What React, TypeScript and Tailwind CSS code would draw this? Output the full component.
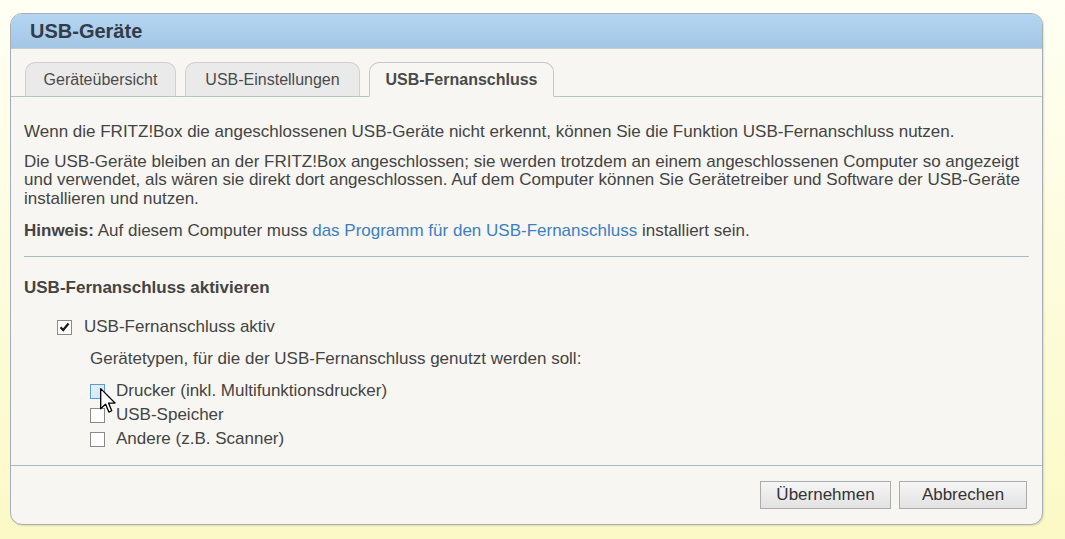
import React from 'react';

type Tab = { label: string; width: string; active?: boolean };

const tabs: Tab[] = [
  { label: 'Geräteübersicht', width: 'w-[151px]' },
  { label: 'USB-Einstellungen', width: 'w-[175px]' },
  { label: 'USB-Fernanschluss', width: 'w-[185px]', active: true },
];

function Box({ checked, hover }: { checked?: boolean; hover?: boolean }) {
  return (
    <span
      className={`flex h-[15px] w-[15px] shrink-0 items-center justify-center border ${
        hover
          ? 'border-[#5b9bd5] bg-gradient-to-br from-[#e4f1fb] to-[#cfe6f7]'
          : 'border-[#8a8a8a] bg-white'
      }`}
    >
      {checked && (
        <svg width="11" height="10" viewBox="0 0 11 10">
          <path d="M1.5 5.2 L4.2 8 L9.5 1.5" fill="none" stroke="#1a1a1a" strokeWidth="2.2" />
        </svg>
      )}
    </span>
  );
}

function Cursor() {
  return (
    <svg
      className="absolute left-[100px] top-[388px]"
      width="17"
      height="26"
      viewBox="0 0 13 20"
    >
      <path
        d="M0.5 0.5 L0.5 16 L4.2 12.4 L6.8 18.5 L9 17.5 L6.5 11.6 L11.5 11.6 Z"
        fill="#ffffff"
        stroke="#000000"
        strokeWidth="1"
        strokeLinejoin="round"
      />
    </svg>
  );
}

export default function App() {
  return (
    <div className="relative min-h-[539px] w-full bg-gradient-to-b from-[#fffff4] to-[#fcf9c6] pl-[10px] pt-[13px] font-['Liberation_Sans',Arial,sans-serif] text-[#444444]">
      <div className="flex h-[512px] w-[1033px] flex-col overflow-hidden rounded-[12px] border border-[#a5afb2] bg-[#f7f6f2] shadow-[1px_1px_2px_rgba(0,0,0,0.12)]">
        {/* Titelleiste */}
        <div className="flex h-[35px] shrink-0 items-center border-b border-[#c3ccd0] bg-gradient-to-b from-[#b5d6f2] to-[#a3c6e5] px-[19px]">
          <h1 className="text-[20px] font-bold text-[#313d48]">USB-Geräte</h1>
        </div>

        {/* Reiter */}
        <div className="flex h-[48px] shrink-0 items-end gap-[9px] border-b border-[#b4c4c7] pl-[14px]">
          {tabs.map((t) => (
            <div
              key={t.label}
              className={`-mb-px flex h-[35px] items-center justify-center rounded-t-[10px] border text-[16px] ${t.width} ${
                t.active
                  ? 'border-[#c4c8c8] border-b-[#f7f6f2] bg-[#f7f6f2] font-bold text-[#4a4a4a]'
                  : 'border-[#cfcfcf] border-b-[#b4c4c7] bg-[#eaeaea] text-[#4a4a4a]'
              }`}
            >
              {t.label}
            </div>
          ))}
        </div>

        {/* Inhalt */}
        <div className="flex-1 px-[13px] text-[17px] leading-[18.5px]">
          <p className="mt-[26px] whitespace-nowrap">
            Wenn die FRITZ!Box die angeschlossenen USB-Geräte nicht erkennt, können Sie die Funktion USB-Fernanschluss nutzen.
          </p>
          <p className="mt-[11px] whitespace-nowrap">
            Die USB-Geräte bleiben an der FRITZ!Box angeschlossen; sie werden trotzdem an einem angeschlossenen Computer so angezeigt
            <br />
            und verwendet, als wären sie direkt dort angeschlossen. Auf dem Computer können Sie Gerätetreiber und Software der USB-Geräte
            <br />
            installieren und nutzen.
          </p>
          <p className="mt-[14px] whitespace-nowrap">
            <span className="font-bold">Hinweis:</span> Auf diesem Computer muss{' '}
            <a className="text-[#3d7fc1]">das Programm für den USB-Fernanschluss</a> installiert sein.
          </p>

          <div className="mt-[15px] border-t border-[#a3bcc0]" />

          <h2 className="mt-[22px] font-bold">USB-Fernanschluss aktivieren</h2>

          <label className="ml-[33px] mt-[21px] flex items-center gap-[12px]">
            <Box checked />
            <span>USB-Fernanschluss aktiv</span>
          </label>

          <div className="ml-[66px]">
            <p className="mt-[13px]">Gerätetypen, für die der USB-Fernanschluss genutzt werden soll:</p>
            <div className="mt-[12px] flex flex-col">
              <label className="flex h-[23px] items-center gap-[11px]">
                <Box hover />
                <span>Drucker (inkl. Multifunktionsdrucker)</span>
              </label>
              <label className="flex h-[24px] items-center gap-[11px]">
                <Box />
                <span>USB-Speicher</span>
              </label>
              <label className="flex h-[24px] items-center gap-[11px]">
                <Box />
                <span>Andere (z.B. Scanner)</span>
              </label>
            </div>
          </div>
        </div>

        {/* Schaltflächen */}
        <div className="flex h-[59px] shrink-0 items-center justify-end gap-[8px] border-t border-[#a3bcc0] pr-[15px]">
          <button className="h-[28px] w-[131px] border border-[#acacac] bg-gradient-to-b from-[#f6f6f6] to-[#e2e2e2] text-[17px] text-[#333333]">
            Übernehmen
          </button>
          <button className="h-[28px] w-[128px] border border-[#acacac] bg-gradient-to-b from-[#f6f6f6] to-[#e2e2e2] text-[17px] text-[#333333]">
            Abbrechen
          </button>
        </div>
      </div>
      <Cursor />
    </div>
  );
}
